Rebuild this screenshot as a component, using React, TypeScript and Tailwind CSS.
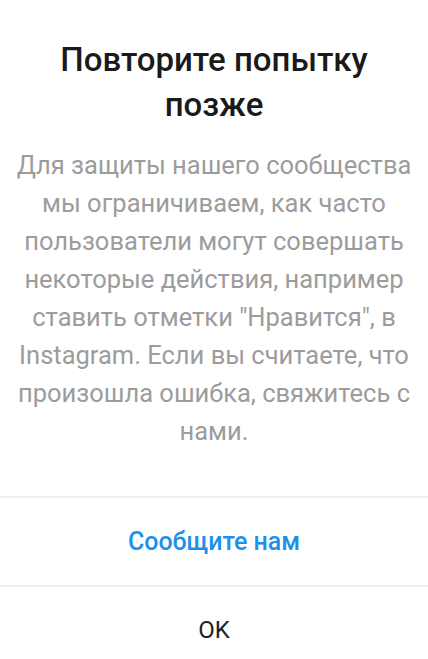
const App = () => {
  return (
    <div className="w-full h-[659px] bg-white overflow-hidden flex flex-col font-['Roboto',sans-serif]">
      <div className="pt-[37px] px-[10px] text-center">
        <h1 className="text-[33px] leading-[45px] font-medium text-[#1a1a1a]">
          Повторите попытку
          <br />
          позже
        </h1>
        <p className="mt-[19px] text-[25.5px] leading-[38px] text-[#9c9c9c]">
          Для защиты нашего сообщества мы ограничиваем, как часто пользователи
          могут совершать некоторые действия, например ставить отметки
          "Нравится", в Instagram. Если вы считаете, что произошла ошибка,
          свяжитесь с нами.
        </p>
      </div>
      <div className="mt-[46px] border-t-2 border-[#efefef]">
        <button className="w-full h-[87px] text-[25px] font-medium text-[#1c91ec]">
          Сообщите нам
        </button>
      </div>
      <div className="border-t-2 border-[#efefef]">
        <button className="w-full h-[86px] text-[24px] text-[#222]">
          OK
        </button>
      </div>
    </div>
  );
};

export default App;
